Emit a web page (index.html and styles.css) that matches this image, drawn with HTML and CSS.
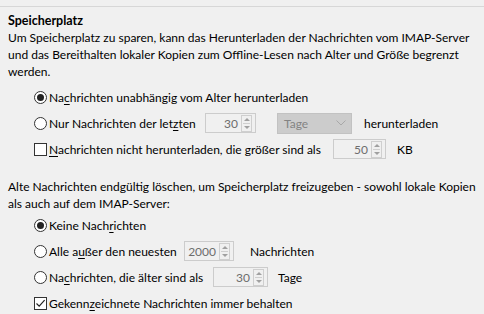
FILE: index.html
```html
<!DOCTYPE html>
<html lang="de">
<head>
<meta charset="utf-8">
<link rel="stylesheet" href="styles.css">
</head>
<body>
<div class="panel">
  <div class="title">Speicherplatz</div>
  <p class="desc">Um Speicherplatz zu sparen, kann das Herunterladen der Nachrichten vom IMAP-Server und das Bereithalten lokaler Kopien zum Offline-Lesen nach Alter und Größe begrenzt werden.</p>
  <div class="options first">
    <div class="row">
      <span class="radio on"></span><span class="label">Na<u>c</u>hrichten unabhängig vom Alter herunterladen</span>
    </div>
    <div class="row">
      <span class="radio"></span><span class="label w1">Nur Nachrichten der let<u>z</u>ten</span>
      <span class="spin s1"><span class="val">30</span><span class="arrows"><i class="up"></i><i class="dn"></i></span></span>
      <span class="combo">Tage<svg class="chev" width="10" height="6" viewBox="0 0 10 6"><path d="M0.5 0.5 L5 5 L9.5 0.5" fill="none" stroke="#a8a8a8" stroke-width="1"/></svg></span>
      <span class="after2">herunterladen</span>
    </div>
    <div class="row">
      <span class="check"></span><span class="label w2"><u>N</u>achrichten nicht herunterladen, die größer sind als</span>
      <span class="spin s2"><span class="val">50</span><span class="arrows"><i class="up"></i><i class="dn"></i></span></span>
      <span class="after3">KB</span>
    </div>
  </div>
  <p class="desc second">Alte Nachrichten endgültig löschen, um Speicherplatz freizugeben - sowohl lokale Kopien als auch auf dem IMAP-Server:</p>
  <div class="options">
    <div class="row">
      <span class="radio on"></span><span class="label">Keine Nach<u>r</u>ichten</span>
    </div>
    <div class="row">
      <span class="radio"></span><span class="label w3">Alle a<u>u</u>ßer den neuesten</span>
      <span class="spin s3"><span class="val">2000</span><span class="arrows"><i class="up"></i><i class="dn"></i></span></span>
      <span class="after4">Nachrichten</span>
    </div>
    <div class="row">
      <span class="radio"></span><span class="label w4">Na<u>c</u>hrichten, die älter sind als</span>
      <span class="spin s4"><span class="val">30</span><span class="arrows"><i class="up"></i><i class="dn"></i></span></span>
      <span class="after5">Tage</span>
    </div>
    <div class="row">
      <span class="check on"><svg width="11" height="11" viewBox="0 0 11 11"><path d="M1.5 5.5 L4.2 8.2 L9.6 2.2" fill="none" stroke="#222" stroke-width="1.2"/></svg></span><span class="label">Gekenn<u>z</u>eichnete Nachrichten immer behalten</span>
    </div>
  </div>
</div>
</body>
</html>
```

FILE: styles.css
```css
html, body {
  margin: 0;
  padding: 0;
  background: #f0f0f0;
}
body {
  font-family: Lato, "Open Sans", sans-serif;
  font-size: 12px;
  color: #000;
  width: 484px;
  height: 314px;
  overflow: hidden;
}
.panel {
  margin-top: 6px;
  border-top: 1px solid #d7d7d7;
  padding: 5px 8px 0 8px;
}
.title {
  font-weight: bold;
  font-size: 12.5px;
  line-height: 17px;
  height: 17px;
}
.desc {
  margin: 0;
  line-height: 17px;
}
.options {
  padding-left: 26px;
}
.options.first {
  margin-top: 4px;
}
.desc.second {
  margin-top: 16px;
}
.row {
  display: flex;
  align-items: center;
  height: 26px;
}
.radio {
  width: 11px;
  height: 11px;
  border: 1px solid #333;
  border-radius: 50%;
  background: #fff;
  position: relative;
  flex: none;
}
.radio.on::after {
  content: "";
  position: absolute;
  left: 2px;
  top: 2px;
  width: 7px;
  height: 7px;
  border-radius: 50%;
  background: #222;
}
.check {
  width: 11px;
  height: 11px;
  border: 1px solid #333;
  background: #fff;
  flex: none;
  display: flex;
}
.label {
  margin-left: 2px;
  white-space: nowrap;
}
.label u {
  text-decoration-thickness: 1px;
  text-underline-offset: 2px;
}
.w1 { width: 156px; }
.w2 { width: 284px; }
.w3 { width: 135px; }
.w4 { width: 164px; }
.spin {
  display: flex;
  align-items: center;
  height: 20px;
  border: 1px solid #cccccc;
  background: #f0f0f0;
  color: #6d6d6d;
  box-sizing: border-box;
  flex: none;
}
.spin .val {
  flex: 1;
  text-align: right;
  padding-right: 3px;
}
.arrows {
  width: 9px;
  height: 15px;
  border: 1px solid #cfcfcf;
  margin-right: 3px;
  display: flex;
  flex-direction: column;
  justify-content: space-between;
  align-items: center;
  position: relative;
  background: #f0f0f0;
}
.arrows::after {
  content: "";
  position: absolute;
  left: 1px;
  right: 1px;
  top: 7px;
  border-top: 1px solid #cfcfcf;
}
.arrows i {
  width: 0;
  height: 0;
  border-left: 3px solid transparent;
  border-right: 3px solid transparent;
}
.arrows .up {
  border-bottom: 3px solid #a0a0a0;
  margin-top: 2px;
}
.arrows .dn {
  border-top: 3px solid #a0a0a0;
  margin-bottom: 2px;
}
.s1 { width: 51px; }
.s2 { width: 53px; }
.s3 { width: 50px; }
.s4 { width: 55px; }
.combo {
  display: flex;
  align-items: center;
  justify-content: space-between;
  box-sizing: border-box;
  width: 75px;
  height: 21px;
  padding: 0 5px 0 6px;
  background: #cccccc;
  border: 1px solid #c2c2c2;
  color: #838383;
  margin-left: 21px;
  flex: none;
}
.after2 { margin-left: 12px; }
.after3 { margin-left: 11px; }
.after4 { margin-left: 16px; }
.after5 { margin-left: 10px; }
```
